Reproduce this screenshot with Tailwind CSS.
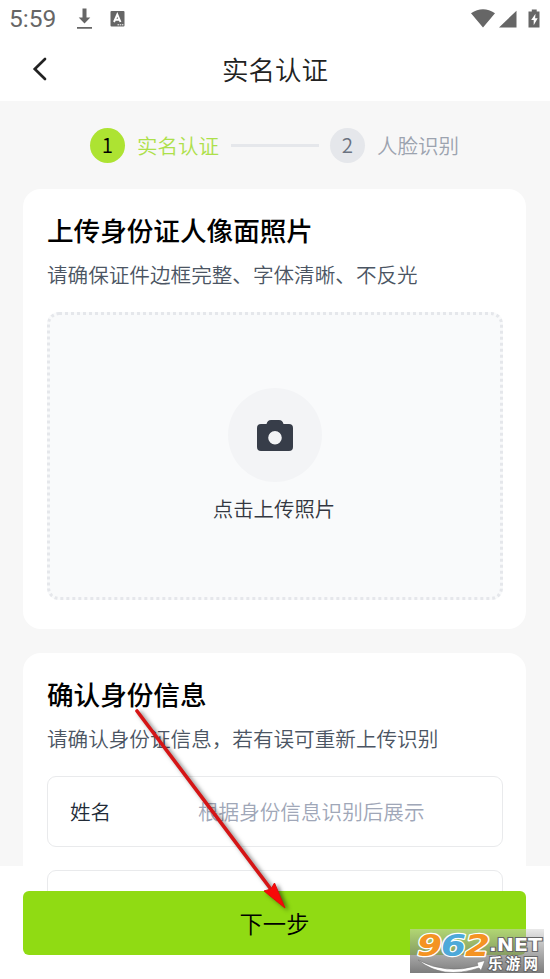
<!DOCTYPE html>
<html lang="zh-CN">
<head>
<meta charset="utf-8">
<title>实名认证</title>
<script src="https://cdn.jsdelivr.net/npm/@tailwindcss/browser@4"></script>
</head>
<body class="bg-white">
<div class="relative flex h-[979px] w-[550px] flex-col overflow-hidden bg-white font-['Noto_Sans_CJK_SC',sans-serif] font-[350] whitespace-nowrap">
  <!-- Status bar -->
  <header class="flex h-[37px] shrink-0 items-center justify-between pr-[10px] pl-[9px] text-[#666]">
    <div class="flex items-center">
      <span class="w-[67px] font-[Roboto,sans-serif] text-[24.500px] leading-[37px] font-normal">5:59</span>
      <svg class="h-[22px] w-[17px]" viewBox="0 0 17 22" fill="currentColor"><path d="M6.500 .5h4v9h3.800L8.500 15.500 2.700 9.500h3.800zM1 19h15v1.800H1z"/></svg>
      <svg class="ml-[17px] h-[16px] w-[15px]" viewBox="0 0 15 16"><rect x=".5" width="14" height="15.500" rx="1" fill="currentColor"/><path d="M4 11 7.300 3.500 10.500 11M5.200 8.700h4.200" fill="none" stroke="#fff" stroke-width="1.900"/><path d="M7.500 13.800h6" stroke="#fff" stroke-width="1" stroke-dasharray="1.500 .7"/></svg>
    </div>
    <svg class="h-[22px] w-[70px]" viewBox="0 0 70 22" fill="currentColor"><path d="M1 5.800Q13 -2.300 25 5.800L13 20zM46.500 3.300V20H29zM58.500 4h3.300V2h4.900v2H69.500v16h-11z" transform="translate(0 -.6)"/><path d="m65.500 5.700-4.300 6.300h2.500v5.200l4-7h-2.600z" fill="#fff"/></svg>
  </header>
  <!-- Navigation bar -->
  <nav class="relative flex h-[64px] shrink-0 items-center justify-center">
    <svg class="absolute top-[19px] left-[32px] h-[26px] w-[16px]" viewBox="0 0 16 26" fill="none" stroke="#222" stroke-width="2.700" stroke-linecap="round"><path d="M13 3 2.800 13 13 23"/></svg>
    <h1 class="text-[26.500px] leading-[64px] text-[#222]">实名认证</h1>
  </nav>
  <main class="h-[790px] shrink-0 overflow-hidden bg-[linear-gradient(#f7f7f7_765px,#fff_765px)] pr-[24px] pl-[23px]">
    <!-- Steps -->
    <div class="flex h-[88px] items-center pl-[67px] text-[20.500px] leading-[30px]">
      <span class="flex h-[35px] w-[35px] items-center justify-center rounded-full bg-[#ade332] pb-[2px] text-black">1</span>
      <span class="ml-[12px] w-[82px] text-[#ade04a]">实名认证</span>
      <span class="ml-[12px] h-[3px] w-[88px] bg-[#e5e7eb]"></span>
      <span class="ml-[11px] flex h-[35px] w-[35px] items-center justify-center rounded-full bg-[#e5e7eb] pb-[2px] text-[#6b7280]">2</span>
      <span class="ml-[12px] text-[#9ca3af]">人脸识别</span>
    </div>
    <!-- Photo upload -->
    <section class="h-[440px] rounded-[18px] bg-white px-[24px] pt-[21px]">
      <h2 class="text-[26.600px] leading-[40px] font-medium text-black">上传身份证人像面照片</h2>
      <p class="mt-[9px] text-[20.600px] leading-[30px] text-[#4b5563]">请确保证件边框完整、字体清晰、不反光</p>
      <div class="mt-[23px] flex h-[288px] w-[456px] flex-col items-center rounded-[12px] border-3 border-dotted border-[#e5e7eb] bg-[#f9fafb] pt-[73px]">
        <div class="flex h-[94px] w-[94px] items-center justify-center rounded-full bg-[#f3f4f6]">
          <svg class="h-[32px] w-[36px]" viewBox="0 0 36 32"><path fill="#373d49" fill-rule="evenodd" d="M4 4.500h5.500q1-4 4.500-4h8q3.500 0 4.500 4H32q4 0 4 4v19q0 4-4 4H4q-4 0-4-4v-19q0-4 4-4m14 7a6.800 6.800 0 1 0 0 13.600 6.800 6.800 0 0 0 0-13.600" transform="translate(0 .5)"/></svg>
        </div>
        <p class="mt-[10px] mr-[2px] text-[20.400px] leading-[32px] text-[#333741]">点击上传照片</p>
      </div>
    </section>
    <!-- Identity details -->
    <section class="mt-[24px] h-[260px] rounded-t-[18px] bg-white px-[24px] pt-[21px]">
      <h2 class="text-[26.600px] leading-[40px] font-medium text-black">确认身份信息</h2>
      <p class="mt-[9px] text-[20.600px] leading-[30px] text-[#4b5563]">请确认身份证信息，若有误可重新上传识别</p>
      <div class="mt-[23px] flex h-[71px] w-[456px] items-center rounded-[9px] border border-[#e9eaec] pl-[22px] text-[20.600px]">
        <span class="w-[128px] text-[#222b37]">姓名</span><span class="text-[#a0a7b8]">根据身份信息识别后展示</span>
      </div>
      <div class="mt-[23px] h-[71px] w-[456px] rounded-[9px] border border-[#e9eaec]"></div>
    </section>
  </main>
  <button class="mr-[24px] ml-[23px] h-[64px] shrink-0 rounded-[6px] bg-[#90db13] text-[23.300px] leading-[64px] font-[350] text-black">下一步</button>

  <!-- Pointer arrow -->
  <svg class="absolute top-[700px] left-[125px] h-[220px] w-[175px] drop-shadow-[3px_2px_2px_rgba(0,0,0,0.5)]" viewBox="125 700 175 220"><path d="m137 711 133 177" stroke="#d51516" stroke-width="3.600" stroke-linecap="round"/><path d="m285 908-21-17 7-2 3.500-6z" fill="#f80909" stroke="#e00c0c"/></svg>

  <!-- Watermark -->
  <div class="absolute top-[929px] left-[410px] h-[44px] w-[134px] bg-linear-to-b from-[#d3d3d3]/50 to-[#666]/85">
    <svg class="h-[44px] w-[134px] overflow-visible" viewBox="0 0 134 44">
      <g font-family="DejaVu Sans, sans-serif" font-weight="700" font-style="italic" font-size="31" stroke="#fff" stroke-width="2.500" paint-order="stroke" stroke-linejoin="round">
        <text x="7" y="27" textLength="25" lengthAdjust="spacingAndGlyphs" fill="#f49322">9</text>
        <text x="31" y="27" textLength="25" lengthAdjust="spacingAndGlyphs" fill="#4da9d9">6</text>
        <text x="55" y="27" textLength="25" lengthAdjust="spacingAndGlyphs" fill="#f49322">2</text>
      </g>
      <path d="M8 31Q36 46 68 36.500l-1-3 8-2-4 10-2-2.500Q32 51 8 31" fill="#fff" stroke="#777" stroke-width=".6"/>
      <g fill="#fff" stroke="#666" stroke-width="2" paint-order="stroke" font-weight="700">
        <text x="79" y="22" textLength="53" lengthAdjust="spacingAndGlyphs" font-family="DejaVu Sans, sans-serif" font-size="18">.NET</text>
        <text x="78" y="39.500" textLength="50" font-family="Noto Sans CJK SC, sans-serif" font-size="14.500">乐游网</text>
      </g>
    </svg>
  </div>
</div>
</body>
</html>
